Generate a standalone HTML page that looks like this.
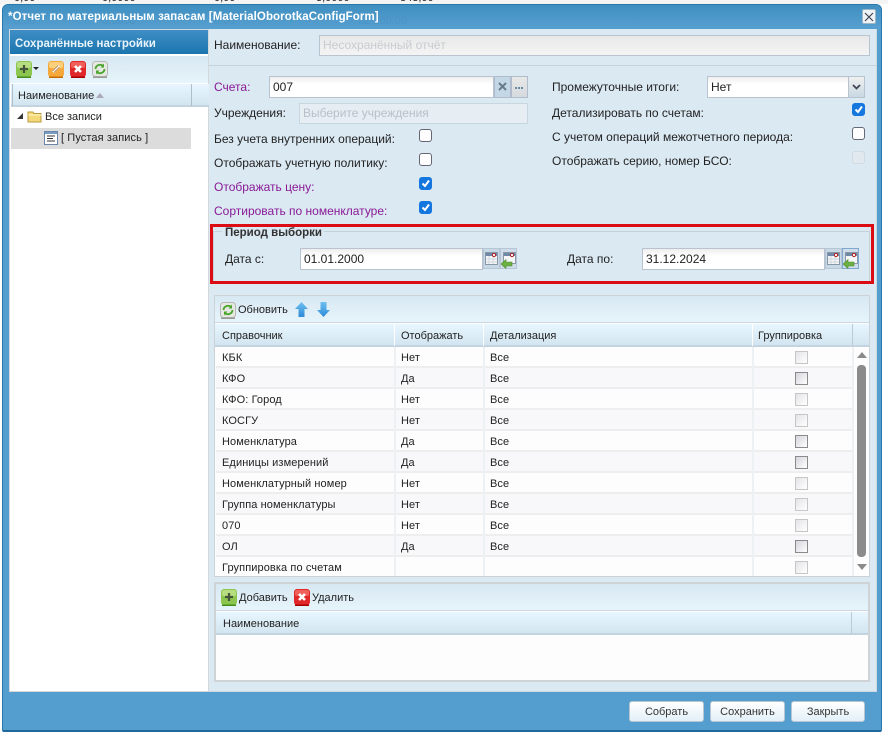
<!DOCTYPE html>
<html lang="ru"><head><meta charset="utf-8"><style>
*{box-sizing:border-box}
html,body{margin:0;padding:0;width:888px;height:739px;overflow:hidden;background:#fff;font-family:"Liberation Sans",sans-serif;font-size:12px;color:#222}
.a{position:absolute}
.t{position:absolute;white-space:nowrap;line-height:14px}
.p{color:#8a1a96}
.inp{position:absolute;background:linear-gradient(#eee,#fff 7px);border:1px solid #b9c3cf;height:22px;line-height:20px;padding-left:3px;font-size:12px}
.dis{position:absolute;background:#e6eef3;border:1px solid #c8d6e0;color:#b8c0c8;height:21px;line-height:19px;padding-left:3px;font-size:12px}
.cb{position:absolute;width:13px;height:13px;border:1px solid #667;border-radius:3px;background:#fff}
.cb.on{background:#1477e0;border-color:#1477e0}
.cb.on svg{position:absolute;left:0;top:0}
.cb.off{background:#e2eaf0;border-color:#cfdae2}
.hd{background:linear-gradient(#e8f6fe,#d3e5f0);border-bottom:2px solid #c3d3df}
.vl{position:absolute;width:2px;background:#eef1f3}
.row{position:absolute;left:216px;width:637px;height:21px;border-bottom:2px solid #eeeeee;background:#fdfdfe}
.row:nth-child(even){background:#f8f8fa}
.row span{position:absolute;top:4px;line-height:14px;font-size:11px;white-space:nowrap;letter-spacing:.1px}
.g{position:absolute;left:579px;top:4px;width:13px;height:13px;border:1px solid #c6c6c6;background:linear-gradient(135deg,#e4e4e8,#fff)}
.g.d{border-color:#8a8a8a;background:linear-gradient(135deg,#d5d5dc,#fff)}
.ic{position:absolute;width:16px;height:16px;border-radius:3px}
.btn{position:absolute;top:701px;height:21px;border:1px solid #b6c6d2;border-radius:3px;background:linear-gradient(#fff,#e2f0f8);text-align:center;line-height:21px;font-size:11px;color:#333}
.cal{position:absolute;width:17px;height:21px;background:#c8d9e6;border:1px solid #b6c6d6}
.sv{position:absolute}
.gh{position:absolute;white-space:nowrap;line-height:14px;font-size:11px;color:#4a94c6}
</style></head><body>

<div class="a" style="left:0;top:0;width:888px;height:4px;background:#f4f4f4"></div>
<div class="t" style="left:14px;top:-9px;font-size:11px">0,00</div>
<div class="t" style="left:102px;top:-9px;font-size:11px">0,0000</div>
<div class="t" style="left:214px;top:-9px;font-size:11px">0,00</div>
<div class="t" style="left:316px;top:-9px;font-size:11px">3,0000</div>
<div class="t" style="left:400px;top:-9px;font-size:11px">843,00</div>

<!-- window -->
<div class="a" style="left:2px;top:4px;width:880px;height:728px;background:#539ecf;border:1px solid #2a77aa;border-bottom:2px solid #20689c;border-radius:6px 6px 2px 2px"></div>
<div class="a" style="left:3px;top:5px;width:878px;height:23px;background:linear-gradient(#3f8fc1,#569fd0);border-radius:5px 5px 0 0"></div>
<div class="gh" style="left:14px;top:14px">0,00</div>
<div class="gh" style="left:102px;top:14px">0,0000</div>
<div class="gh" style="left:214px;top:14px">0,00</div>
<div class="gh" style="left:358px;top:14px">32 200,00</div>
<div class="t" style="left:8px;top:10px;color:#fff;font-weight:bold;font-size:11.5px;letter-spacing:.09px">*Отчет по материальным запасам [MaterialOborotkaConfigForm]</div>
<div class="a" style="left:862px;top:9px;width:14px;height:15px;background:#eef3f6;border:1px solid #9fb6c6;border-radius:2px"></div>
<svg class="sv" style="left:864px;top:12px" width="10" height="10"><path d="M1 1L9 9M9 1L1 9" stroke="#445" stroke-width="1.2"/></svg>

<!-- left panel -->
<div class="a" style="left:9px;top:29px;width:200px;height:663px;background:#fff;border:1px solid #d4d8da"></div>
<div class="a" style="left:10px;top:30px;width:198px;height:24px;background:linear-gradient(#3e8fc5,#1c75ae)"></div>
<div class="t" style="left:15px;top:37px;color:#e8f4fb;font-weight:bold;font-size:11.5px">Сохранённые настройки</div>
<div class="a" style="left:10px;top:56px;width:198px;height:27px;background:linear-gradient(#d8e8f2,#e6f4fb)"></div>
<svg class="sv" style="left:16px;top:61px" width="16" height="17"><rect width="16" height="16" rx="3" fill="#8cc64e"/><rect x="1" y="1" width="14" height="6" rx="2" fill="#b6dd80"/><rect x="1" y="15.500" width="14" height="1.500" fill="#3f8f18"/><path d="M8 4V12M4 8H12" stroke="#45553c" stroke-width="2.200"/></svg>
<svg class="sv" style="left:33px;top:67px" width="6" height="4"><path d="M0 0H6L3 3Z" fill="#222"/></svg>
<svg class="sv" style="left:48px;top:61px" width="16" height="17"><rect width="16" height="16" rx="3" fill="#f6a83a"/><rect x="1" y="1" width="14" height="6" rx="2" fill="#fcd07a"/><rect x="1" y="15.500" width="14" height="1.500" fill="#c96a00"/><path d="M5 11L11 5" stroke="#fff" stroke-width="3.400"/><path d="M4.500 10L10 4.500M6 11.500L11.500 6" stroke="#b06a20" stroke-width=".8"/></svg>
<svg class="sv" style="left:70px;top:61px" width="16" height="17"><rect width="16" height="16" rx="3" fill="#e0282a"/><rect x="1" y="1" width="14" height="6" rx="2" fill="#f0605a"/><rect x="1" y="15.500" width="14" height="1.500" fill="#a80000"/><path d="M5 5L11 11M11 5L5 11" stroke="#fff" stroke-width="2.600"/></svg>
<svg class="sv" style="left:92px;top:61px" width="16" height="17"><rect x=".5" y=".5" width="15" height="15" rx="3" fill="#e6e8e4" stroke="#b5b8b2"/><rect x="1" y="15.500" width="14" height="1.500" fill="#9a9a94"/><path d="M3.500 8A4.500 4.500 0 0 1 11.500 5.500M12.500 8A4.500 4.500 0 0 1 4.500 10.500" fill="none" stroke="#4aa52a" stroke-width="1.800"/><path d="M12 2.500V6.500H8.500ZM4 13.500V9.500H7.500Z" fill="#4aa52a"/></svg>
<div class="a hd" style="left:11px;top:84px;width:198px;height:23px"></div>
<div class="a" style="left:191px;top:84px;width:1px;height:22px;background:#aebfca"></div>
<div class="a" style="left:12px;top:84px;width:1px;height:22px;background:#aebfca"></div>
<div class="t" style="left:18px;top:89px;font-size:11px">Наименование</div>
<svg class="sv" style="left:96px;top:93px" width="8" height="5"><path d="M0 5L4 0L8 5Z" fill="#aab"/></svg>
<svg class="sv" style="left:17px;top:113px" width="6" height="6"><path d="M0 6L6 0V6Z" fill="#333"/></svg>
<svg class="sv" style="left:27px;top:110px" width="16" height="13"><path d="M1 2H6L7 3.500H14V12H1Z" fill="#f5d878" stroke="#b89a3c"/><path d="M1 5H15" stroke="#fff6c8"/></svg>
<div class="t" style="left:45px;top:110px;font-size:11px">Все записи</div>
<div class="a" style="left:11px;top:128px;width:180px;height:21px;background:#dcdcdc"></div>
<svg class="sv" style="left:44px;top:131px" width="14" height="14"><rect x=".5" y=".5" width="13" height="13" fill="#fff" stroke="#6a86a8"/><rect x="1" y="1" width="12" height="2" fill="#7a9cc4"/><path d="M3 5H11M3 7.500H9M3 10H11" stroke="#333"/></svg>
<div class="t" style="left:61px;top:131px;font-size:11px;letter-spacing:.1px">[ Пустая запись ]</div>

<!-- right panel -->
<div class="a" style="left:209px;top:29px;width:668px;height:663px;background:#dbe9f3;border:1px solid #cfd8de;border-top:0;border-left:0"></div>
<div class="a" style="left:209px;top:65px;width:667px;height:1px;background:#c5d3dd"></div>
<div class="t" style="left:214px;top:38px">Наименование:</div>
<div class="dis" style="left:319px;top:35px;width:551px;background:linear-gradient(#e8e8e8,#f4f4f4);border-color:#b8c4cf;color:#c8ccd0">Несохранённый отчёт</div>

<div class="t p" style="left:214px;top:80px">Счета:</div>
<div class="inp" style="left:269px;top:76px;width:225px">007</div>
<div class="a" style="left:494px;top:76px;width:17px;height:22px;background:#c3d7e5;border:1px solid #b0bccb"></div>
<svg class="sv" style="left:498px;top:82px" width="9" height="9"><path d="M1 1L8 8M8 1L1 8" stroke="#667c8c" stroke-width="2"/></svg>
<div class="a" style="left:511px;top:76px;width:17px;height:22px;background:linear-gradient(#e8e8e8,#d6dbde);border:1px solid #b0bccb"></div>
<div class="a" style="left:515px;top:87px;width:9px;height:2px;background-image:linear-gradient(90deg,#6a8aa0 2px,transparent 2px);background-size:3px 2px"></div>
<div class="t" style="left:214px;top:106px">Учреждения:</div>
<div class="dis" style="left:299px;top:103px;width:229px">Выберите учреждения</div>
<div class="t" style="left:214px;top:132px">Без учета внутренних операций:</div>
<div class="cb" style="left:419px;top:129px"></div>
<div class="t" style="left:214px;top:156px">Отображать учетную политику:</div>
<div class="cb" style="left:419px;top:153px"></div>
<div class="t p" style="left:214px;top:180px">Отображать цену:</div>
<div class="cb on" style="left:419px;top:177px"><svg width="11" height="11"><path d="M2.500 5.500L5 8L9 2.500" fill="none" stroke="#fff" stroke-width="2"/></svg></div>
<div class="t p" style="left:214px;top:204px">Сортировать по номенклатуре:</div>
<div class="cb on" style="left:419px;top:201px"><svg width="11" height="11"><path d="M2.500 5.500L5 8L9 2.500" fill="none" stroke="#fff" stroke-width="2"/></svg></div>

<div class="t" style="left:552px;top:80px">Промежуточные итоги:</div>
<div class="inp" style="left:707px;top:76px;width:142px">Нет</div>
<div class="a" style="left:848px;top:76px;width:17px;height:22px;background:linear-gradient(#f0f0f0,#c8d8e2);border:1px solid #b9c3cf"></div>
<svg class="sv" style="left:852px;top:84px" width="9" height="6"><path d="M1 1L4.500 4.500L8 1" fill="none" stroke="#445" stroke-width="1.800"/></svg>
<div class="t" style="left:552px;top:106px">Детализировать по счетам:</div>
<div class="cb on" style="left:852px;top:103px"><svg width="11" height="11"><path d="M2.500 5.500L5 8L9 2.500" fill="none" stroke="#fff" stroke-width="2"/></svg></div>
<div class="t" style="left:552px;top:130px">С учетом операций межотчетного периода:</div>
<div class="cb" style="left:852px;top:127px"></div>
<div class="t" style="left:552px;top:154px">Отображать серию, номер БСО:</div>
<div class="cb off" style="left:852px;top:151px"></div>

<!-- period -->
<div class="a" style="left:213px;top:231px;width:657px;height:50px;border:1px solid #c6d2da;border-bottom:0"></div>
<div class="a" style="left:210px;top:224px;width:664px;height:60px;border:3px solid #dc0c14"></div>
<div class="a" style="left:222px;top:227px;width:102px;height:12px;background:#dbe9f3"></div>
<div class="t" style="left:225px;top:226px;font-weight:bold;font-size:11.500px;color:#333">Период выборки</div>
<div class="t" style="left:225px;top:252px">Дата с:</div>
<div class="inp" style="left:300px;top:248px;width:183px">01.01.2000</div>
<div class="cal" style="left:483px;top:248px"></div>
<div class="cal" style="left:500px;top:248px;background:#cfdde8"></div>
<div class="t" style="left:567px;top:252px">Дата по:</div>
<div class="inp" style="left:642px;top:248px;width:183px">31.12.2024</div>
<div class="cal" style="left:825px;top:248px"></div>
<div class="cal" style="left:842px;top:248px;border-color:#7ea8d0;background:#cfdde8"></div>
<svg class="sv" style="left:485px;top:252px" width="13" height="13"><rect x=".5" y=".5" width="12" height="12" fill="#f4f6f8" stroke="#8898a8"/><rect x="1" y="1" width="11" height="3" fill="#6f88a8"/><path d="M4 4V12M8 4V12M1 7H12M1 10H12" stroke="#d0d8e0"/><circle cx="9" cy="3" r="1.600" fill="#fff" stroke="#b02020"/></svg>
<svg class="sv" style="left:501px;top:251px" width="15" height="18"><rect x="2.500" y="1.500" width="12" height="11" fill="#f4f6f8" stroke="#8898a8"/><rect x="3" y="2" width="11" height="3" fill="#6f88a8"/><circle cx="11" cy="4" r="1.600" fill="#fff" stroke="#b02020"/><path d="M0 13L5 8.500V11H11V15H5V17.500Z" fill="#6cb044" stroke="#4c8c2c" stroke-width=".6"/></svg>
<svg class="sv" style="left:827px;top:252px" width="13" height="13"><rect x=".5" y=".5" width="12" height="12" fill="#f4f6f8" stroke="#8898a8"/><rect x="1" y="1" width="11" height="3" fill="#6f88a8"/><path d="M4 4V12M8 4V12M1 7H12M1 10H12" stroke="#d0d8e0"/><circle cx="9" cy="3" r="1.600" fill="#fff" stroke="#b02020"/></svg>
<svg class="sv" style="left:843px;top:251px" width="15" height="18"><rect x="2.500" y="1.500" width="12" height="11" fill="#f4f6f8" stroke="#8898a8"/><rect x="3" y="2" width="11" height="3" fill="#6f88a8"/><circle cx="11" cy="4" r="1.600" fill="#fff" stroke="#b02020"/><path d="M0 13L5 8.500V11H11V15H5V17.500Z" fill="#6cb044" stroke="#4c8c2c" stroke-width=".6"/></svg>

<!-- grid 1 -->
<div class="a" style="left:214px;top:295px;width:656px;height:282px;border:1px solid #ccd2d6;background:#fdfdfe"></div>
<div class="a" style="left:215px;top:296px;width:654px;height:27px;background:linear-gradient(#d8e8f2,#e6f4fb);border-bottom:1px solid #ccd6dd"></div>
<svg class="sv" style="left:220px;top:302px" width="16" height="17"><rect x=".5" y=".5" width="15" height="15" rx="3" fill="#e6e8e4" stroke="#b5b8b2"/><rect x="1" y="15.500" width="14" height="1.500" fill="#9a9a94"/><path d="M3.500 8A4.500 4.500 0 0 1 11.500 5.500M12.500 8A4.500 4.500 0 0 1 4.500 10.500" fill="none" stroke="#4aa52a" stroke-width="1.800"/><path d="M12 2.500V6.500H8.500ZM4 13.500V9.500H7.500Z" fill="#4aa52a"/></svg>
<div class="t" style="left:238px;top:303px;font-size:11px">Обновить</div>
<svg class="sv" style="left:295px;top:302px" width="13" height="15"><defs><linearGradient id="u" x1="0" y1="0" x2="0" y2="1"><stop offset="0" stop-color="#6cc0f0"/><stop offset="1" stop-color="#2f8ad8"/></linearGradient></defs><path d="M6.500 0L13 7H9.500V15H3.500V7H0Z" fill="url(#u)"/></svg>
<svg class="sv" style="left:317px;top:302px" width="13" height="15"><path d="M6.500 15L13 8H9.500V0H3.500V8H0Z" fill="url(#u)"/></svg>
<div class="a hd" style="left:215px;top:324px;width:654px;height:23px"></div>
<div class="a" style="left:394px;top:324px;width:1px;height:22px;background:#fff"></div>
<div class="a" style="left:483px;top:324px;width:1px;height:22px;background:#fff"></div>
<div class="a" style="left:752px;top:324px;width:1px;height:22px;background:#fff"></div>
<div class="a" style="left:852px;top:324px;width:1px;height:22px;background:#b8ccd8"></div>
<div class="t" style="left:222px;top:329px;font-size:11px">Справочник</div>
<div class="t" style="left:401px;top:329px;font-size:11px">Отображать</div>
<div class="t" style="left:490px;top:329px;font-size:11px">Детализация</div>
<div class="t" style="left:758px;top:329px;font-size:11px">Группировка</div>

<div style="position:absolute;left:0;top:0">
<div class="row" style="top:347px"><span style="left:6px">КБК</span><span style="left:185px">Нет</span><span style="left:274px">Все</span><i class="g"></i></div>
<div class="row" style="top:368px"><span style="left:6px">КФО</span><span style="left:185px">Да</span><span style="left:274px">Все</span><i class="g d"></i></div>
<div class="row" style="top:389px"><span style="left:6px">КФО: Город</span><span style="left:185px">Нет</span><span style="left:274px">Все</span><i class="g"></i></div>
<div class="row" style="top:410px"><span style="left:6px">КОСГУ</span><span style="left:185px">Нет</span><span style="left:274px">Все</span><i class="g"></i></div>
<div class="row" style="top:431px"><span style="left:6px">Номенклатура</span><span style="left:185px">Да</span><span style="left:274px">Все</span><i class="g d"></i></div>
<div class="row" style="top:452px"><span style="left:6px">Единицы измерений</span><span style="left:185px">Да</span><span style="left:274px">Все</span><i class="g d"></i></div>
<div class="row" style="top:473px"><span style="left:6px">Номенклатурный номер</span><span style="left:185px">Нет</span><span style="left:274px">Все</span><i class="g"></i></div>
<div class="row" style="top:494px"><span style="left:6px">Группа номенклатуры</span><span style="left:185px">Нет</span><span style="left:274px">Все</span><i class="g"></i></div>
<div class="row" style="top:515px"><span style="left:6px">070</span><span style="left:185px">Нет</span><span style="left:274px">Все</span><i class="g"></i></div>
<div class="row" style="top:536px"><span style="left:6px">ОЛ</span><span style="left:185px">Да</span><span style="left:274px">Все</span><i class="g d"></i></div>
<div class="row" style="top:557px;height:19px;border-bottom:0;background:#fdfdfe"><span style="left:6px">Группировка по счетам</span><i class="g"></i></div>
</div>
<div class="vl" style="left:394px;top:347px;height:229px"></div>
<div class="vl" style="left:483px;top:347px;height:229px"></div>
<div class="vl" style="left:752px;top:347px;height:229px"></div>
<div class="vl" style="left:852px;top:347px;height:229px"></div>
<svg class="sv" style="left:857px;top:352px" width="10" height="6"><path d="M0 6L5 0L10 6Z" fill="#8a8a8a"/></svg>
<div class="a" style="left:857px;top:365px;width:9px;height:192px;background:#8b8b8b;border-radius:4px"></div>
<svg class="sv" style="left:857px;top:564px" width="10" height="6"><path d="M0 0L5 6L10 0Z" fill="#8a8a8a"/></svg>

<!-- grid 2 -->
<div class="a" style="left:214px;top:582px;width:656px;height:100px;border:2px solid #cfd3d6;background:#fdfdfe"></div>
<div class="a" style="left:216px;top:584px;width:652px;height:27px;background:linear-gradient(#d8e8f2,#e6f4fb);border-bottom:1px solid #ccd6dd"></div>
<svg class="sv" style="left:221px;top:589px" width="16" height="17"><rect width="16" height="16" rx="3" fill="#8cc64e"/><rect x="1" y="1" width="14" height="6" rx="2" fill="#b6dd80"/><rect x="1" y="15.500" width="14" height="1.500" fill="#3f8f18"/><path d="M8 4V12M4 8H12" stroke="#45553c" stroke-width="2.200"/></svg>
<div class="t" style="left:239px;top:591px;font-size:11px">Добавить</div>
<svg class="sv" style="left:294px;top:589px" width="16" height="17"><rect width="16" height="16" rx="3" fill="#e0282a"/><rect x="1" y="1" width="14" height="6" rx="2" fill="#f0605a"/><rect x="1" y="15.500" width="14" height="1.500" fill="#a80000"/><path d="M5 5L11 11M11 5L5 11" stroke="#fff" stroke-width="2.600"/></svg>
<div class="t" style="left:312px;top:591px;font-size:11px">Удалить</div>
<div class="a hd" style="left:216px;top:612px;width:652px;height:23px"></div>
<div class="a" style="left:851px;top:612px;width:1px;height:22px;background:#b8ccd8"></div>
<div class="t" style="left:223px;top:617px;font-size:11px">Наименование</div>

<!-- buttons -->
<div class="btn" style="left:629px;width:75px">Собрать</div>
<div class="btn" style="left:710px;width:75px">Сохранить</div>
<div class="btn" style="left:791px;width:74px">Закрыть</div>
</body></html>
